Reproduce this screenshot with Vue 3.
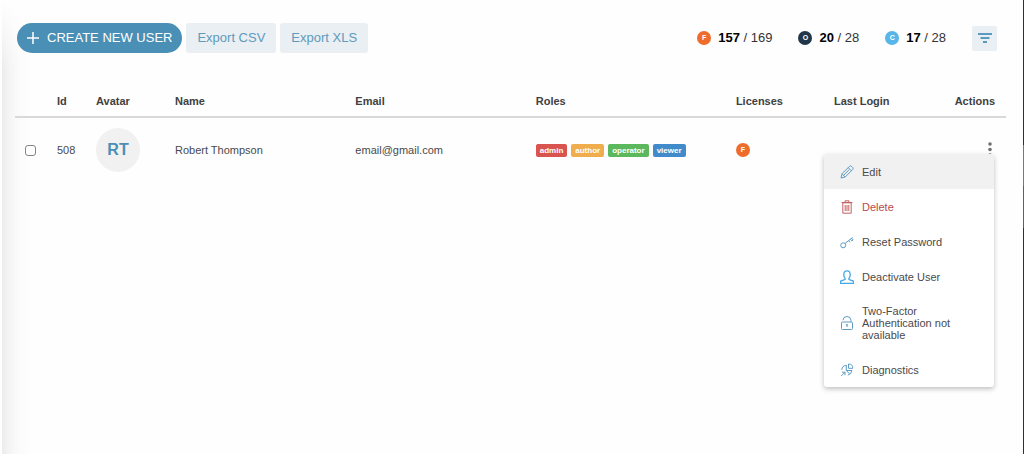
<script setup>
import { ref } from 'vue'

const selected = ref(false)

const licenses = [
  { letter: 'F', name: 'full', used: 157, total: 169 },
  { letter: 'O', name: 'operator-seat', used: 20, total: 28 },
  { letter: 'C', name: 'client', used: 17, total: 28 },
]

const roles = ['admin', 'author', 'operator', 'viewer']
</script>

<template>
  <div class="page">
    <header class="toolbar">
      <button class="create" type="button">
        <svg width="12" height="12" viewBox="0 0 12 12" fill="none" stroke="#fff" stroke-width="1.5"><path d="M6 0v12M0 6h12" /></svg>
        CREATE NEW USER
      </button>
      <button class="export" type="button">Export CSV</button>
      <button class="export" type="button">Export XLS</button>
      <div class="usage">
        <div v-for="l in licenses" :key="l.name" class="seat">
          <span class="dot" :class="l.name">{{ l.letter }}</span>
          <span><b>{{ l.used }}</b> / {{ l.total }}</span>
        </div>
      </div>
      <button class="filter" type="button" aria-label="Filter">
        <svg width="14" height="10" viewBox="0 0 14 10" fill="none" stroke="#5b9bbf" stroke-width="2"><path d="M0 1h14M2.5 5h9M5 9h4" /></svg>
      </button>
    </header>

    <table>
      <colgroup>
        <col class="c-check" /><col class="c-id" /><col class="c-avatar" /><col class="c-wide" /><col class="c-wide" />
        <col class="c-roles" /><col class="c-license" /><col class="c-license" /><col />
      </colgroup>
      <thead>
        <tr>
          <th></th><th>Id</th><th>Avatar</th><th>Name</th><th>Email</th><th>Roles</th><th>Licenses</th><th>Last Login</th><th class="last">Actions</th>
        </tr>
      </thead>
      <tbody>
        <tr>
          <td class="check"><input v-model="selected" type="checkbox" aria-label="Select Robert Thompson" /></td>
          <td>508</td>
          <td><div class="avatar">RT</div></td>
          <td>Robert Thompson</td>
          <td>email@gmail.com</td>
          <td>
            <div class="roles"><span v-for="r in roles" :key="r" :class="r">{{ r }}</span></div>
          </td>
          <td><span class="dot full">F</span></td>
          <td></td>
          <td class="actions">
            <button class="more" type="button" aria-label="Actions">
              <svg width="4" height="16" viewBox="0 0 4 16" fill="#707070"><circle cx="2" cy="2" r="1.8" /><circle cx="2" cy="7.5" r="1.8" /><circle cx="2" cy="13" r="1.8" /></svg>
            </button>
            <div class="menu">
              <button class="item active" type="button">
                <svg viewBox="0 0 14 14"><path d="M1 13l1-4.2L9.4 1.4q1-.9 2-.2l1.4 1.4q.7 1-.2 2L5.2 12zM8.2 2.6l3.2 3.2M2 8.8l3.2 3.2M9.2 4.6L3.7 10.3" /></svg>
                <span>Edit</span>
              </button>
              <button class="item danger" type="button">
                <svg viewBox="0 0 14 14"><path d="M2.8 2.8h8.4v10.4H2.8zM1.5 2.5h11M5 2.5V.8h4v1.7M5.2 5v6M7 5v6M8.8 5v6" /></svg>
                <span>Delete</span>
              </button>
              <button class="item" type="button">
                <svg viewBox="0 0 14 14"><circle cx="3.2" cy="10.3" r="2.5" /><path d="M5 8.5l7.5-6M8.7 5.6l1.4 1.7M10.4 4.2l1.5 1.7 1.2-1-1.4-1.8" /></svg>
                <span>Reset Password</span>
              </button>
              <button class="item bright" type="button">
                <svg viewBox="0 0 14 14"><path d="M.5 13.3v-1.8Q.7 10.8 2 10.5l2.6-.8q.8-.4.5-1.3-1.3-1.2-1.3-3.5Q3.7.8 7 .8t3.2 4.1q0 2.3-1.3 3.5-.3.9.5 1.3l2.6.8q1.3.3 1.5 1v1.8z" /></svg>
                <span>Deactivate User</span>
              </button>
              <button class="item" type="button">
                <svg viewBox="0 0 14 14"><rect x="1.5" y="6" width="11" height="7.5" rx="1" /><path d="M3 4.2Q3 .5 7 .5t4 4V6M7 8.5v2.5M6 8.8h2" /></svg>
                <span>Two-Factor Authentication not available</span>
              </button>
              <button class="item" type="button">
                <svg viewBox="0 0 14 14"><path d="M8.5 1v4.3h4.3Q12.8 1 8.5 1zM6.3 2.2Q2 2.6 1.8 6.8M6.3 2.2V7.5h5.5q-.3 4-4 4.6M6.3 7.5l3.3 3.4M1.2 13l3.6-3.6M2 9.2h3v3" /></svg>
                <span>Diagnostics</span>
              </button>
            </div>
          </td>
        </tr>
      </tbody>
    </table>
  </div>
</template>

<style>
body {
  margin: 0;
  background: #fefefe;
}
</style>

<style scoped>
.page {
  box-sizing: border-box;
  min-height: 100vh;
  padding: 23px 18px 0 13px;
  border-left: 2px solid #fefefe;
  background:
    linear-gradient(#25333e 145px, #b06a2c 145px 186px, #56616a 186px 228px, #25333e 228px) right / 1px 100% no-repeat,
    linear-gradient(#fefefe, rgba(254, 254, 254, 0) 70px),
    linear-gradient(to right, #ececec 0, #f5f5f5 8px, #fbfbfb 17px, #fefefe 30px);
  font: 11px/14px "Liberation Sans", Arial, sans-serif;
  color: #4a4a4a;
}
button {
  margin: 0;
  padding: 0;
  border: 0;
  background: none;
  font: inherit;
  color: inherit;
  cursor: pointer;
}
.toolbar {
  display: flex;
  align-items: center;
  padding: 0 9px 0 2px;
  font-size: 13px;
}
.create {
  display: flex;
  align-items: center;
  gap: 8px;
  height: 30px;
  padding: 0 10px;
  border-radius: 15px;
  background: #4a8fb5;
  color: #fff;
}
.export {
  height: 30px;
  margin-left: 4px;
  padding: 0 11px;
  border-radius: 3px;
  background: #e9eff3;
  color: #5f9abd;
}
.usage {
  display: flex;
  gap: 26px;
  margin-left: auto;
  color: #333;
}
.seat {
  display: flex;
  align-items: center;
  gap: 7px;
}
.seat b {
  color: #000;
}
.dot {
  display: flex;
  align-items: center;
  justify-content: center;
  width: 14px;
  height: 14px;
  border-radius: 50%;
  color: #fff;
  font-size: 7px;
  font-weight: bold;
  line-height: 14px;
}
.full { background: #ee6c2c; }
.operator-seat { background: #20364a; }
.client { background: #57b5e8; }
.filter {
  display: flex;
  align-items: center;
  justify-content: center;
  width: 25px;
  height: 25px;
  margin-left: 26px;
  border-radius: 2px;
  background: #e9eff3;
}
table {
  width: 100%;
  margin-top: 32px;
  table-layout: fixed;
  border-collapse: separate;
  border-spacing: 0;
}
.c-check { width: 42px; }
.c-id { width: 39px; }
.c-avatar { width: 79px; }
.c-wide { width: 18.2%; }
.c-roles { width: 20.2%; }
.c-license { width: 9.9%; }
th {
  height: 31px;
  padding: 0;
  border-bottom: 2px solid #d9d9d9;
  color: #414141;
  text-align: left;
}
th.last {
  padding-right: 11px;
  text-align: right;
}
td {
  height: 64px;
  padding: 0;
}
.check input {
  display: block;
  appearance: none;
  box-sizing: border-box;
  width: 11px;
  height: 11px;
  margin: 0 0 0 10px;
  border: 1px solid #858585;
  border-radius: 3px;
  background: #fff;
}
.check input:checked { background: #4a8fb5; }
.avatar {
  width: 44px;
  height: 44px;
  border-radius: 50%;
  background: #f1f1f1;
  color: #4a8fb5;
  font-size: 16px;
  font-weight: bold;
  line-height: 44px;
  text-align: center;
}
.roles {
  display: flex;
  gap: 4px;
  color: #fff;
  font-size: 8px;
  font-weight: bold;
  line-height: 13px;
}
.roles span {
  padding: 0 4px;
  border-radius: 2px;
}
.admin { background: #d9534f; }
.author { background: #f0ad4e; }
.operator { background: #5cb85c; }
.viewer { background: #428bca; }
.actions {
  position: relative;
}
.more {
  display: block;
  margin: 0 14px 0 auto;
}
.more svg { display: block; }
.menu {
  position: absolute;
  top: 36px;
  right: 12px;
  width: 170px;
  border-radius: 3px;
  background: #fff;
  box-shadow: 0 2px 5px rgba(0, 0, 0, 0.25);
  overflow: hidden;
}
.item {
  display: flex;
  align-items: center;
  gap: 8px;
  width: 100%;
  min-height: 35px;
  padding: 11px 30px 11px 16px;
  line-height: 12px;
  text-align: left;
}
.item svg {
  flex: none;
  width: 14px;
  height: 14px;
  margin: -2px 0;
  fill: none;
  stroke: #5f9cc2;
  stroke-width: 1;
}
.item.active { background: #f1f1f1; }
.item.danger { color: #b8494b; }
.item.danger svg { stroke: #c46363; }
.item.bright svg { stroke: #43a8e5; stroke-width: 1.3; }
</style>
